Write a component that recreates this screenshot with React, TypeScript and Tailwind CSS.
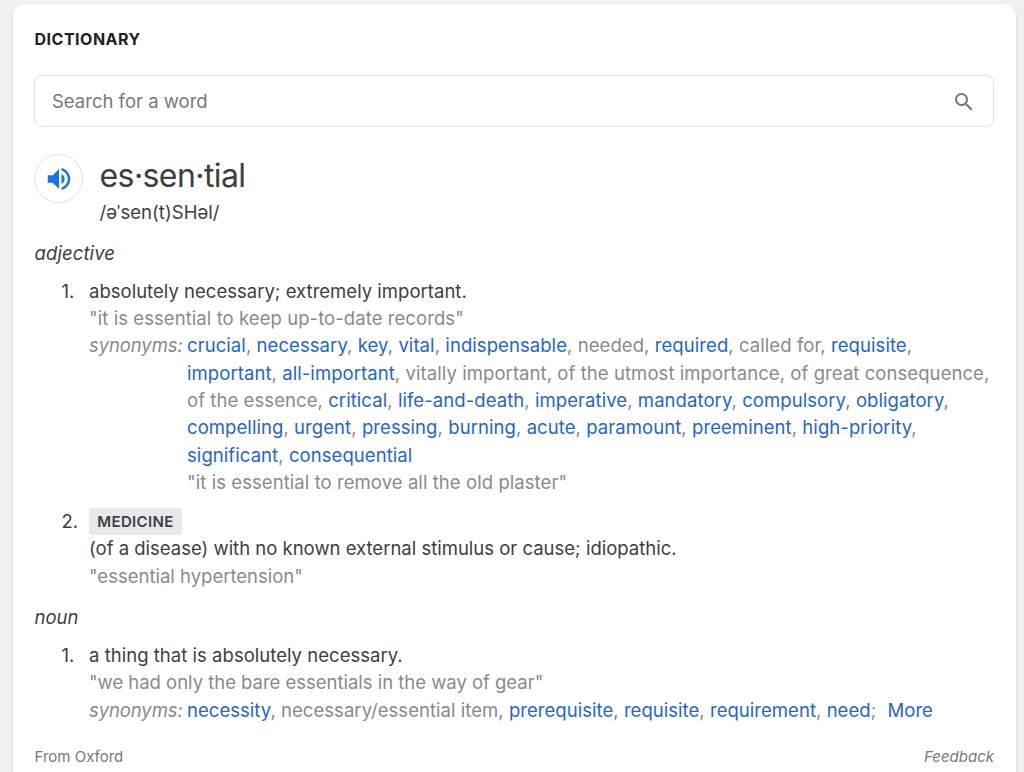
import { Fragment } from "react";
import { MdSearch, MdVolumeUp } from "react-icons/md";

type Synonym = { word: string; link?: boolean };

const essentialSynonyms: Synonym[] = [
  { word: "crucial", link: true },
  { word: "necessary", link: true },
  { word: "key", link: true },
  { word: "vital", link: true },
  { word: "indispensable", link: true },
  { word: "needed" },
  { word: "required", link: true },
  { word: "called for" },
  { word: "requisite", link: true },
  { word: "important", link: true },
  { word: "all-important", link: true },
  { word: "vitally important" },
  { word: "of the utmost importance" },
  { word: "of great consequence" },
  { word: "of the essence" },
  { word: "critical", link: true },
  { word: "life-and-death", link: true },
  { word: "imperative", link: true },
  { word: "mandatory", link: true },
  { word: "compulsory", link: true },
  { word: "obligatory", link: true },
  { word: "compelling", link: true },
  { word: "urgent", link: true },
  { word: "pressing", link: true },
  { word: "burning", link: true },
  { word: "acute", link: true },
  { word: "paramount", link: true },
  { word: "preeminent", link: true },
  { word: "high-priority", link: true },
  { word: "significant", link: true },
  { word: "consequential", link: true },
];

const nounSynonyms: Synonym[] = [
  { word: "necessity", link: true },
  { word: "necessary/essential item" },
  { word: "prerequisite", link: true },
  { word: "requisite", link: true },
  { word: "requirement", link: true },
  { word: "need", link: true },
];

function SynonymList({ items }: { items: Synonym[] }) {
  return (
    <>
      {items.map((item, i) => (
        <Fragment key={item.word}>
          {i > 0 && ", "}
          {item.link ? (
            <a href="#" className="whitespace-nowrap text-[#2566c8]">
              {item.word}
            </a>
          ) : (
            <span>{item.word}</span>
          )}
        </Fragment>
      ))}
    </>
  );
}

export default function App() {
  return (
    <div className="h-[772px] overflow-hidden bg-[#f1f1f4] pt-1 pr-2 pl-[12.5px] font-['Inter','Liberation_Sans',sans-serif]">
      <div className="h-[790px] rounded-xl bg-white pr-[22px] pl-[22px] text-[18.5px] leading-[27.3px] text-[#3c4043] shadow-[0_1px_3px_rgba(0,0,0,0.14)]">
        <h2 className="pt-[22px] text-[16px] font-bold tracking-[0.5px] text-[#202124]">
          DICTIONARY
        </h2>

        <div className="-ml-[0.5px] mt-[22px] flex h-[52px] items-center justify-between rounded-lg border border-[#dfe1e5] pr-[17px] pl-[17px]">
          <span className="text-[#75797e]">Search for a word</span>
          <MdSearch className="mt-[2px] size-6 text-[#757575]" />
        </div>

        <div className="-ml-[0.5px] mt-[27px] flex">
          <button className="flex size-[49px] items-center justify-center rounded-full border border-[#dfe1e5]">
            <MdVolumeUp className="size-[30px] text-[#1a73e8]" />
          </button>
          <div className="ml-[16.5px]">
            <h1 className="text-[32px] leading-[44px] tracking-[-0.58px]">
              es·sen·tial
            </h1>
            <p className="mt-[0.5px] tracking-[0.05px]">/əˈsen(t)SHəl/</p>
          </div>
        </div>

        <p className="mt-[13.5px] tracking-[0.1px] italic">adjective</p>

        <ol className="mt-[11px]">
          <li className="flex">
            <span className="w-[54.5px] shrink-0 pl-[27px]">1.</span>
            <div>
              <p className="tracking-[0.02px]">
                absolutely necessary; extremely important.
              </p>
              <p className="tracking-[0.07px] text-[#8a8a8c]">
                "it is essential to keep up-to-date records"
              </p>
              <div className="flex text-[#8a8a8c]">
                <span className="w-[98px] shrink-0 tracking-[-0.1px] italic">
                  synonyms:
                </span>
                <div className="w-[812px] shrink-0 tracking-[0.07px]">
                  <p>
                    <SynonymList items={essentialSynonyms} />
                  </p>
                  <p>"it is essential to remove all the old plaster"</p>
                </div>
              </div>
            </div>
          </li>
          <li className="mt-[11.5px] flex">
            <span className="w-[54.5px] shrink-0 pl-[27px]">2.</span>
            <div>
              <span className="flex h-[27px] w-[93px] items-center justify-center rounded-[3px] bg-[#e8e8ed] text-[15px] font-semibold tracking-[0.35px]">
                MEDICINE
              </span>
              <p className="mt-[0.5px]">
                (of a disease) with no known external stimulus or cause;
                idiopathic.
              </p>
              <p className="text-[#8a8a8c]">"essential hypertension"</p>
            </div>
          </li>
        </ol>

        <p className="mt-[14px] italic">noun</p>

        <ol className="mt-[11px]">
          <li className="flex">
            <span className="w-[54.5px] shrink-0 pl-[27px]">1.</span>
            <div>
              <p className="tracking-[0.03px]">
                a thing that is absolutely necessary.
              </p>
              <p className="tracking-[-0.02px] text-[#8a8a8c]">
                "we had only the bare essentials in the way of gear"
              </p>
              <div className="flex text-[#8a8a8c]">
                <span className="w-[98px] shrink-0 tracking-[-0.1px] italic">
                  synonyms:
                </span>
                <p className="tracking-[0.04px]">
                  <SynonymList items={nounSynonyms} />;
                  <a href="#" className="ml-[6px] text-[#2566c8]">
                    {" "}
                    More
                  </a>
                </p>
              </div>
            </div>
          </li>
        </ol>

        <div className="mt-[18.5px] flex justify-between text-[15px] text-[#75797e]">
          <span>From Oxford</span>
          <span className="italic">Feedback</span>
        </div>
      </div>
    </div>
  );
}
